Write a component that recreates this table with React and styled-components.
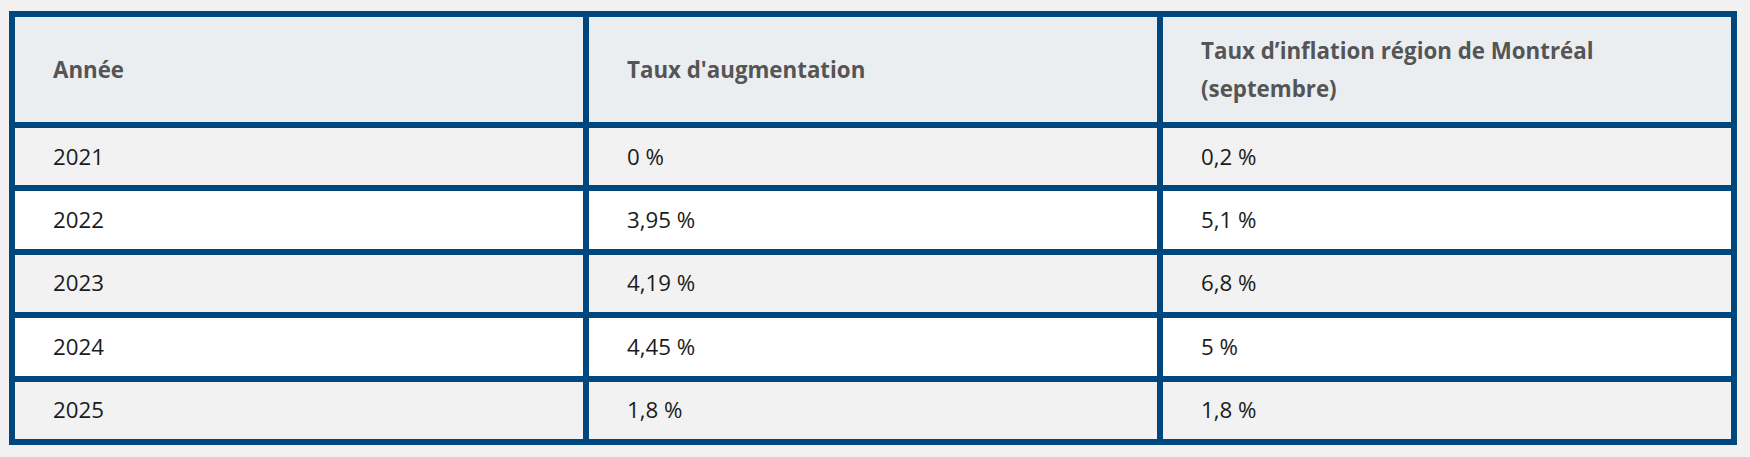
import React from "react";
import styled, { createGlobalStyle } from "styled-components";

const GlobalStyle = createGlobalStyle`
  body {
    margin: 0;
    background: #f1f1f1;
    font-family: "Open Sans", "Noto Sans", sans-serif;
  }
`;

const rows = [
  ["2021", "0 %", "0,2 %"],
  ["2022", "3,95 %", "5,1 %"],
  ["2023", "4,19 %", "6,8 %"],
  ["2024", "4,45 %", "5 %"],
  ["2025", "1,8 %", "1,8 %"],
];

const Page = styled.div`
  padding: 11px 0 0 9px;
`;

const Table = styled.table`
  width: 1728px;
  table-layout: fixed;
  border-collapse: collapse;
  border: 6px solid #00477d;
`;

const HeadCell = styled.th`
  border: 6px solid #00477d;
  background: #ebeef1;
  color: #555;
  font-size: 22.3px;
  font-weight: 700;
  line-height: 38px;
  text-align: left;
  vertical-align: middle;
  padding: 14.5px 38px;
`;

const Row = styled.tr`
  background: ${(p) => (p.$odd ? "#f2f2f2" : "#fff")};
`;

const Cell = styled.td`
  border: 6px solid #00477d;
  color: #1b1b1b;
  font-size: 22.3px;
  line-height: 38px;
  padding: 9.7px 38px;
`;

const App = () => {
  return (
    <Page>
      <GlobalStyle />
      <Table>
        <thead>
          <tr>
            <HeadCell>Année</HeadCell>
            <HeadCell>Taux d'augmentation</HeadCell>
            <HeadCell>
              Taux d’inflation région de Montréal
              <br />
              (septembre)
            </HeadCell>
          </tr>
        </thead>
        <tbody>
          {rows.map((r, i) => (
            <Row key={r[0]} $odd={i % 2 === 0}>
              {r.map((c, j) => (
                <Cell key={j}>{c}</Cell>
              ))}
            </Row>
          ))}
        </tbody>
      </Table>
    </Page>
  );
};

export default App;
